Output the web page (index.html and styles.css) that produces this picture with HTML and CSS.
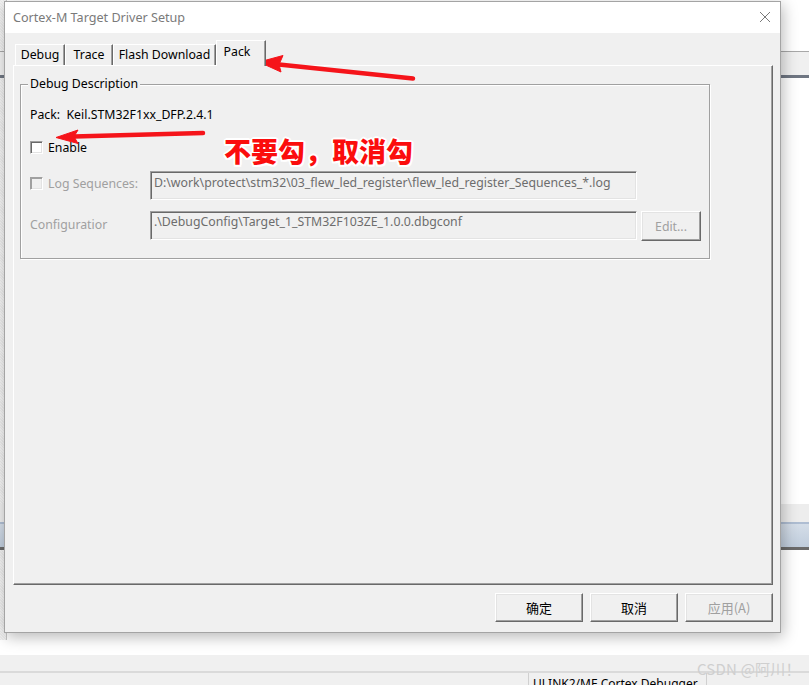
FILE: index.html
```html
<!DOCTYPE html>
<html lang="zh-CN">
<head>
<meta charset="utf-8">
<title>Cortex-M Target Driver Setup</title>
<link rel="stylesheet" href="styles.css">
</head>
<body>
<div class="desk">
  <div class="bg-left"></div>
  <div class="bg-bar-top"></div>
  <div class="bg-bar-mid"></div>
  <div class="bg-status">
    <div class="status-cell status-a"></div>
    <div class="status-cell status-b">ULINK2/ME Cortex Debugger</div>
    <div class="status-cell status-c"></div>
  </div>

  <div class="dialog">
    <div class="titlebar">
      <span class="title">Cortex-M Target Driver Setup</span>
      <svg class="close" width="12" height="12" viewBox="0 0 12 12"><path d="M1 1L11 11M11 1L1 11" stroke="#7a7a7a" stroke-width="1" fill="none"/></svg>
    </div>
    <div class="dbody">
      <div class="tabs">
        <div class="tab tab-debug">Debug</div>
        <div class="tab tab-trace">Trace</div>
        <div class="tab tab-flash">Flash Download</div>
        <div class="tab tab-pack active">Pack</div>
      </div>
      <div class="panel">
        <div class="group">
          <span class="legend">Debug Description</span>
          <div class="row row-pack">Pack:&nbsp; Keil.STM32F1xx_DFP.2.4.1</div>
          <div class="row row-enable"><span class="cb"></span><span class="cb-label">Enable</span></div>
          <div class="row row-log">
            <div class="lbl"><span class="cb cb-dis"></span><span class="cb-label dis">Log Sequences:</span></div>
            <div class="field">D:\work\protect\stm32\03_flew_led_register\flew_led_register_Sequences_*.log</div>
          </div>
          <div class="row row-conf">
            <div class="lbl"><span class="dis">Configuratior</span></div>
            <div class="field">.\DebugConfig\Target_1_STM32F103ZE_1.0.0.dbgconf</div>
            <div class="btn btn-edit dis">Edit...</div>
          </div>
        </div>
      </div>
      <div class="buttons">
        <div class="btn btn-main">确定</div>
        <div class="btn btn-main">取消</div>
        <div class="btn btn-main dis">应用(A)</div>
      </div>
    </div>
  </div>

  <svg class="arrows" width="809" height="685" viewBox="0 0 809 685">
    <g fill="#f5141a" stroke="#f5141a">
      <line x1="279" y1="64.5" x2="413" y2="78.5" stroke-width="4.5" stroke-linecap="round"/>
      <path d="M259 62 L283 55.5 L279 64.5 L281 72 Z" stroke-width="1" stroke-linejoin="round"/>
      <line x1="74" y1="136.5" x2="203" y2="133" stroke-width="4.5" stroke-linecap="round"/>
      <path d="M56 137.5 L78 130 L74 136.5 L78 143.5 Z" stroke-width="1" stroke-linejoin="round"/>
    </g>
  </svg>
  <div class="note">不要勾，取消勾</div>
  <div class="watermark">CSDN @阿川！</div>
</div>
</body>
</html>
```

FILE: styles.css
```css
html, body {
  margin: 0;
  padding: 0;
  background: #ffffff;
}
.desk {
  position: relative;
  width: 809px;
  height: 685px;
  overflow: hidden;
  font-family: "Noto Sans", "Noto Sans CJK SC", sans-serif;
  font-size: 12.3px;
  color: #000;
}

/* background application behind the dialog */
.bg-left {
  position: absolute;
  left: 0; top: 0;
  width: 6px; height: 640px;
  background: repeating-linear-gradient(45deg, #ebebeb 0 1px, #f4f4f4 1px 2px);
  border-right: 1px solid #c8c8c8;
}
.bg-bar-top {
  position: absolute;
  left: 0; top: 51px;
  width: 809px; height: 23px;
  background: #f0f0f0;
  border-top: 1px solid #a8a8a8;
  border-bottom: 3px solid #6f7682;
}
.bg-bar-mid {
  position: absolute;
  left: 0; top: 504px;
  width: 809px; height: 18px;
  background: #ededed;
  border-bottom: 2px solid #aebdd2;
}
.bg-bar-mid::after {
  content: "";
  position: absolute;
  left: 0; top: 20px;
  width: 809px; height: 23px;
  background: linear-gradient(#d4dde8, #c0cddc);
  border-bottom: 3px solid #6b6b6b;
}
.bg-status {
  position: absolute;
  left: 0; top: 655px;
  width: 809px; height: 30px;
  background: #f0f0f0;
  display: flex;
  flex-direction: row;
  flex-wrap: wrap;
}
.bg-status::before {
  content: "";
  display: block;
  width: 809px;
  height: 16px;
  border-bottom: 2px solid #dadada;
  flex: none;
}
.status-cell {
  height: 12px;
  border-left: 1px solid #d0d0d0;
  overflow: hidden;
}
.status-a { width: 528px; border-left: none; }
.status-b {
  width: 173px;
  padding-left: 4px;
  font-size: 12px;
  line-height: 21px;
  color: #000;
  white-space: nowrap;
}
.status-c { flex: 1; }

/* dialog window */
.dialog {
  position: absolute;
  left: 4px; top: 1px;
  width: 777px; height: 632px;
  box-sizing: border-box;
  border: 1px solid #a4a4a4;
  background: #f0f0f0;
  box-shadow: 2px 4px 14px rgba(0, 0, 0, 0.28);
  display: flex;
  flex-direction: column;
}
.titlebar {
  height: 31px;
  flex: none;
  background: #ffffff;
  display: flex;
  align-items: center;
  justify-content: space-between;
  padding: 0 9px 0 8px;
}
.title {
  color: #7a7a7a;
  font-size: 12.6px;
  padding-top: 0;
}
.close { display: block; margin-top: -1px; }

.dbody {
  flex: 1;
  display: flex;
  flex-direction: column;
  padding: 8px 7px 0 8px;
}

/* tabs */
.tabs {
  display: flex;
  align-items: flex-end;
  height: 24px;
  padding-left: 2px;
  position: relative;
  z-index: 1;
}
.tab {
  box-sizing: border-box;
  height: 21px;
  border-top: 1px solid #ffffff;
  border-left: 1px solid #ffffff;
  border-right: 1px solid #696969;
  box-shadow: inset -1px 0 0 #a0a0a0;
  text-align: center;
  line-height: 19px;
  white-space: nowrap;
}
.tab-debug { width: 50px; }
.tab-trace { width: 48px; }
.tab-flash { width: 103px; }
.tab-pack  { width: 50px; }
.tab.active {
  height: 26px;
  margin-bottom: -1px;
  background: #f0f0f0;
  line-height: 21px;
  padding: 0 8px 4px 0;
}

.panel {
  box-sizing: border-box;
  height: 520px;
  flex: none;
  border-top: 1px solid #ffffff;
  border-left: 1px solid #ffffff;
  border-right: 1px solid #696969;
  border-bottom: 1px solid #696969;
  box-shadow: inset -1px -1px 0 #a0a0a0;
  padding: 18px 0 0 6px;
}

.group {
  position: relative;
  box-sizing: border-box;
  width: 690px;
  height: 175px;
  border: 1px solid #a0a0a0;
  box-shadow: inset 1px 1px 0 #ffffff, 1px 1px 0 #ffffff;
  padding: 21px 0 0 9px;
  display: flex;
  flex-direction: column;
}
.legend {
  position: absolute;
  left: 7px; top: -9px;
  padding: 0 2px;
  background: #f0f0f0;
  line-height: 16px;
}
.row {
  display: flex;
  align-items: center;
}
.row-pack { height: 16px; }
.row-enable { height: 16px; margin-top: 17px; }
.row-log { height: 29px; margin-top: 16px; align-items: flex-start; }
.row-conf { height: 30px; margin-top: 11px; align-items: flex-start; }

.cb {
  display: inline-block;
  box-sizing: border-box;
  width: 13px; height: 13px;
  border-top: 1px solid #a0a0a0;
  border-left: 1px solid #a0a0a0;
  border-right: 1px solid #ffffff;
  border-bottom: 1px solid #ffffff;
  box-shadow: inset 1px 1px 0 #696969, inset -1px -1px 0 #e3e3e3;
  background: #ffffff;
  flex: none;
}
.cb-dis { background: #f0f0f0; box-shadow: inset 1px 1px 0 #a0a0a0, inset -1px -1px 0 #e3e3e3; }
.cb-label { margin-left: 5px; }
.dis { color: #a0a0a0; }

.lbl {
  width: 120px;
  height: 24px;
  display: flex;
  align-items: center;
  flex: none;
}
.row-conf .lbl { height: 26px; }
.field {
  box-sizing: border-box;
  width: 487px;
  height: 29px;
  border-top: 1px solid #a0a0a0;
  border-left: 1px solid #a0a0a0;
  border-right: 1px solid #ffffff;
  border-bottom: 1px solid #ffffff;
  box-shadow: inset 1px 1px 0 #696969, inset -1px -1px 0 #e3e3e3;
  padding: 3px 0 0 3px;
  color: #6d6d6d;
  white-space: nowrap;
  overflow: hidden;
  line-height: 16px;
  flex: none;
}
.row-conf .field { padding-top: 2px; }

.btn {
  box-sizing: border-box;
  border-top: 1px solid #ffffff;
  border-left: 1px solid #ffffff;
  border-right: 1px solid #696969;
  border-bottom: 1px solid #696969;
  box-shadow: inset -1px -1px 0 #a0a0a0, inset 1px 1px 0 #e3e3e3;
  display: flex;
  align-items: center;
  justify-content: center;
  flex: none;
}
.btn-edit {
  width: 60px;
  height: 30px;
  margin-left: 4px;
}
.buttons {
  display: flex;
  justify-content: flex-end;
  gap: 7px;
  margin-top: 8px;
  padding-right: 0;
}
.btn-main {
  width: 88px;
  height: 29px;
  font-family: "Noto Sans CJK SC", "Noto Sans", sans-serif;
  font-size: 13px;
}

/* annotations */
.arrows {
  position: absolute;
  left: 0; top: 0;
  pointer-events: none;
}
.note {
  position: absolute;
  left: 224px; top: 132px;
  font-family: "Noto Sans CJK SC", sans-serif;
  font-weight: 900;
  font-size: 27px;
  line-height: 38px;
  color: #fb0d0d;
  text-shadow: -2px 0 0 #fff, 2px 0 0 #fff, 0 -2px 0 #fff, 0 2px 0 #fff,
               -1.5px -1.5px 0 #fff, 1.5px 1.5px 0 #fff, -1.5px 1.5px 0 #fff, 1.5px -1.5px 0 #fff;
  white-space: nowrap;
}
.watermark {
  position: absolute;
  left: 697px; top: 658px;
  font-family: "Noto Sans CJK SC", sans-serif;
  font-size: 15px;
  color: #cfcfcf;
  white-space: nowrap;
  letter-spacing: 0.2px;
}
```
